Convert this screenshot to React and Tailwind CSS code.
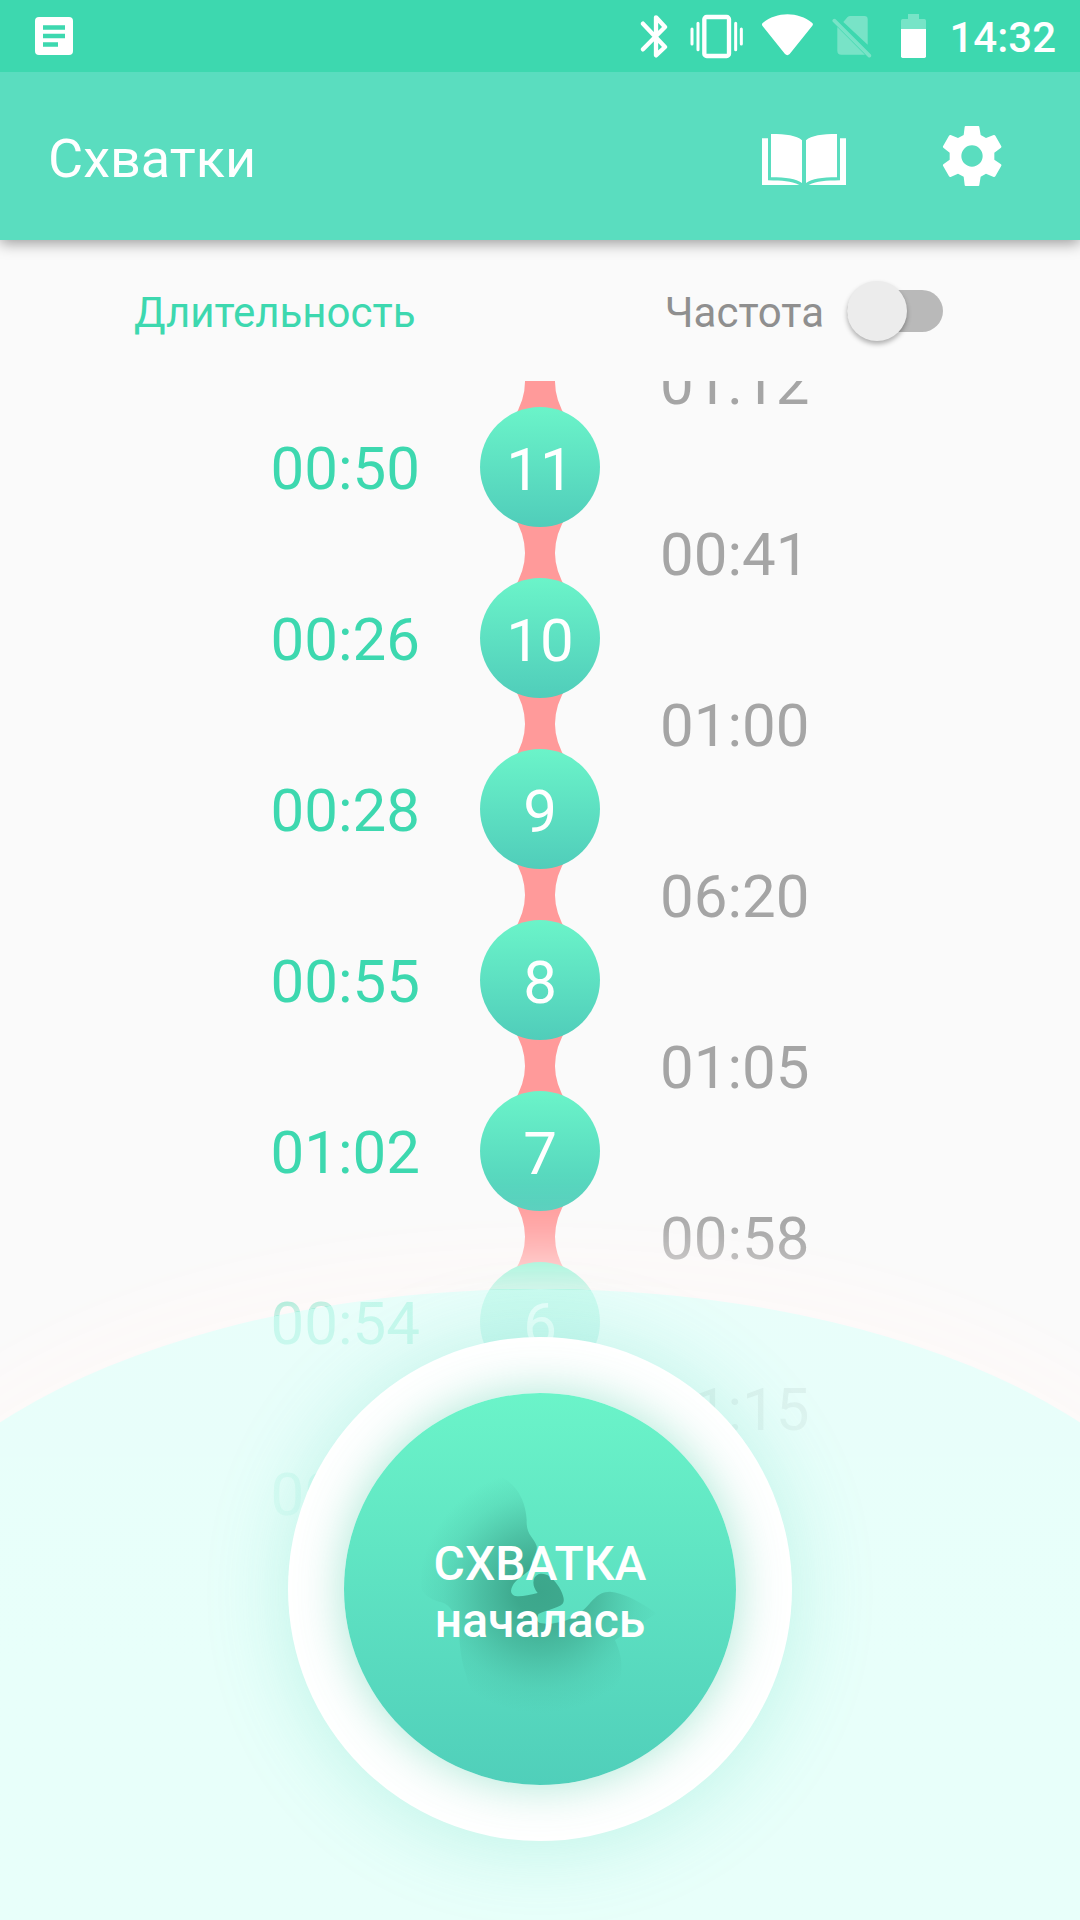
import { useState } from "react";

const contractions = [
  { number: 11, duration: "00:50", interval: "01:12" },
  { number: 10, duration: "00:26", interval: "00:41" },
  { number: 9, duration: "00:28", interval: "01:00" },
  { number: 8, duration: "00:55", interval: "06:20" },
  { number: 7, duration: "01:02", interval: "01:05" },
  { number: 6, duration: "00:54", interval: "00:58" },
  { number: 5, duration: "00:48", interval: "01:15" },
];

function StatusBar() {
  return (
    <div className="relative z-20 h-[72px] shrink-0 bg-[#3dd8af] flex items-center pl-[35px] pr-6 text-white">
      <svg className="w-[38px] h-[38px]" viewBox="0 0 38 38" fill="none">
        <rect width="38" height="38" rx="4" fill="#fff" />
        <path d="M8 10.5h22M8 19h22M8 27.5h15" stroke="#3dd8af" strokeWidth="4.4" />
      </svg>

      <div className="ml-auto flex items-center gap-[18px]">
        {/* Bluetooth */}
        <svg className="w-[29px] h-[45px] mr-[2px]" viewBox="57 42 87 135" fill="none" stroke="currentColor">
          <path d="M66 71l66 70-27 25V52l27 29-66 67" strokeWidth="13" strokeLinecap="round" strokeLinejoin="round" />
        </svg>
        {/* Vibrate */}
        <svg className="w-[55px] h-[45px] -mr-px" viewBox="207 42 165 135" fill="none" stroke="currentColor">
          <rect x="253" y="51" width="74" height="117" rx="7" strokeWidth="13" />
          <path d="M216 87v45M234 70v79M347 70v79M364 87v45" strokeWidth="9" strokeLinecap="round" />
        </svg>
        {/* Wi-Fi */}
        <svg className="w-[53px] h-[45px]" viewBox="423 42 159 135" fill="currentColor">
          <path d="M429 68C470 34 535 34 576 68q5 4 1 9l-68 85q-7 7-14 0L427 77q-3-5 2-9z" />
        </svg>
        {/* No SIM */}
        <svg className="w-10 h-[45px] opacity-30" viewBox="636 42 120 135" fill="currentColor">
          <path d="M670 66l12-14q4-4 9-4h42q10 0 10 10v76z" />
          <path d="M652 81l83 83h-71q-12 0-12-12z" />
          <path d="M643 62L748 167" stroke="currentColor" strokeWidth="11" strokeLinecap="round" />
        </svg>
        {/* Battery */}
        <svg className="w-[27px] h-[45px] ml-[10px] mr-1" viewBox="840 42 81 135" fill="currentColor">
          <path d="M843 88V62q0-5 5-5h16V42h33v15h16q5 0 5 5v26z" opacity=".3" />
          <path d="M843 87h75v82q0 5-5 5h-65q-5 0-5-5z" />
        </svg>
        <span className="text-[42px] leading-[48px] font-medium pt-1">14:32</span>
      </div>
    </div>
  );
}

function AppBar() {
  return (
    <header className="relative z-10 h-[168px] shrink-0 bg-[#5addbf] flex items-center pl-12 pr-[78px] text-white shadow-[0_3px_14px_rgba(0,0,0,0.4)]">
      <h1 className="text-[54px] leading-[64px] pt-[5px]">Схватки</h1>
      <div className="ml-auto flex items-center gap-24">
        <button aria-label="Журнал">
          <svg className="w-[84px] h-[60px]" viewBox="66 78 252 180" fill="currentColor">
            <path d="M66 115h18v126c45 1 67 2 94 14H66z" />
            <path d="M93 102c45 0 77 4 93 19v128c-19-12-46-17-93-17z" />
            <path d="M291 102c-45 0-77 4-93 19v128c19-12 46-17 93-17z" />
            <path d="M318 115h-18v126c-45 1-67 2-94 14h112z" />
          </svg>
        </button>
        <button aria-label="Настройки">
          <svg className="w-[60px] h-[60px]" viewBox="606 78 180 180" fill="currentColor">
            <path
              fillRule="evenodd"
              d="M677 78h38q3 0 3 3l4 24 16 9 23-9q3-1 5 2l18 32q1 2-1 4l-20 15v21l20 14q2 2 1 4l-18 32q-2 3-5 2l-23-10-16 9-4 25q0 3-3 3h-38q-3 0-3-3l-3-25-17-9-22 10q-3 1-5-2l-18-32q-1-2 1-4l19-14v-21l-19-15q-2-2-1-4l18-32q2-3 5-2l22 9 17-9 3-24q0-3 3-3zM696 136a32 32 0 100 64 32 32 0 000-64z"
            />
          </svg>
        </button>
      </div>
    </header>
  );
}

function Timeline() {
  return (
    <div className="flex justify-center gap-[60px] text-[60px] leading-[70px]">
      <ol className="flex-1 text-right text-[#3dd8af]">
        {contractions.map((c) => (
          <li key={c.number} className="h-[171px] pt-[5px] flex items-center justify-end">
            {c.duration}
          </li>
        ))}
      </ol>

      <ol className="-mt-[25px] flex flex-col">
        {contractions.map((c) => (
          <li key={c.number} className="flex flex-col items-center">
            <svg className="w-[54px] h-[75px] -my-3" viewBox="0 0 54 75" fill="#ff9a9a">
              <path d="M0 0Q24 38 0 75H54Q30 38 54 0Z" />
            </svg>
            <span className="relative w-[120px] h-[120px] pt-[5px] rounded-full bg-linear-to-b from-[#6bf4c9] to-[#50cdba] text-white flex items-center justify-center">
              {c.number}
            </span>
          </li>
        ))}
      </ol>

      <ol className="flex-1 -mt-[85px] text-[#a5a5a5]">
        {contractions.map((c) => (
          <li key={c.number} className="h-[171px] pt-[5px] flex items-center">
            {c.interval}
          </li>
        ))}
      </ol>
    </div>
  );
}

function BabySilhouette() {
  return (
    <svg className="absolute inset-x-0 top-[47px] mx-auto w-[280px] h-[280px]" viewBox="0 0 840 840">
      <defs>
        <radialGradient id="baby" gradientUnits="userSpaceOnUse" cx="420" cy="455" r="365">
          <stop offset="0" stopColor="#3ca68b" />
          <stop offset=".2" stopColor="#3ca68b" stopOpacity=".95" />
          <stop offset=".5" stopColor="#3fa98f" stopOpacity=".58" />
          <stop offset=".8" stopColor="#46b39a" stopOpacity=".18" />
          <stop offset="1" stopColor="#46b39a" stopOpacity="0" />
        </radialGradient>
      </defs>
      <path
        fill="url(#baby)"
        d="M290 105C350 125 378 185 380 240C378 285 400 290 410 318C414 340 395 355 396 375C396 400 340 410 333 452C334 478 372 468 413 459C396 440 395 412 415 403C446 394 470 428 482 450C492 470 494 484 488 491C474 505 435 511 415 522C414 530 405 542 420 549C460 556 510 545 550 510C575 488 590 455 630 455C670 458 720 485 770 520L645 600C660 635 666 660 664 690C660 760 620 840 560 840H300C240 820 210 760 200 710C182 660 180 620 177 580C170 530 155 496 125 487C95 480 80 470 65 450C40 300 130 110 290 105Z"
      />
    </svg>
  );
}

function StartPanel({ onStart }) {
  return (
    <div className="absolute inset-x-0 bottom-0 h-[631px] pt-12 flex justify-center items-start">
      <div className="absolute inset-y-0 -inset-x-[13%] rounded-[50%_50%_0_0/54%_54%_0_0] bg-linear-to-b from-[#e4fffa]/80 via-[#e7fffa]/95 via-40% to-[#e8fffa] to-60% shadow-[0_0_80px_25px_#fef9f8]" />
      <div className="relative p-14 rounded-full bg-white shadow-[0_4px_80px_rgba(70,210,180,0.26)]">
        <button
          onClick={onStart}
          className="relative block w-[392px] h-[392px] rounded-full bg-linear-to-b from-[#6bf4c9] to-[#50cfba] text-white shadow-[0_0_48px_rgba(60,200,160,0.44)]"
        >
          <BabySilhouette />
          <span className="relative block pt-[5px] text-5xl leading-[57px] font-medium">
            СХВАТКА
            <br />
            началась
          </span>
        </button>
      </div>
    </div>
  );
}

export default function App() {
  const [byFrequency, setByFrequency] = useState(false);
  const [, setStartedAt] = useState(null);

  return (
    <div className="h-screen flex flex-col bg-[#fafafa] font-['Roboto',sans-serif] overflow-hidden">
      <StatusBar />
      <AppBar />

      {/* Column titles */}
      <div className="h-[141px] shrink-0 flex items-center justify-between pl-[134px] pr-[137px] text-[42px] leading-[48px]">
        <span className="pt-1 text-[#3dd8af]">Длительность</span>
        <label className="flex items-center gap-[23px] text-[#8f8f8f]">
          <span className="pt-1">Частота</span>
          <input
            type="checkbox"
            role="switch"
            className="peer sr-only"
            checked={byFrequency}
            onChange={(e) => setByFrequency(e.target.checked)}
          />
          <span className="w-24 h-[42px] rounded-full bg-[#b9b9b9] flex items-center peer-checked:justify-end peer-checked:bg-[#9eebd7]">
            <span className="w-[60px] h-[60px] rounded-full bg-[#ececec] shadow-[0_3px_5px_rgba(0,0,0,0.3)]" />
          </span>
        </label>
      </div>

      <main className="relative flex-1 min-h-0 overflow-hidden">
        <Timeline />
        <StartPanel onStart={() => setStartedAt(Date.now())} />
      </main>
    </div>
  );
}
